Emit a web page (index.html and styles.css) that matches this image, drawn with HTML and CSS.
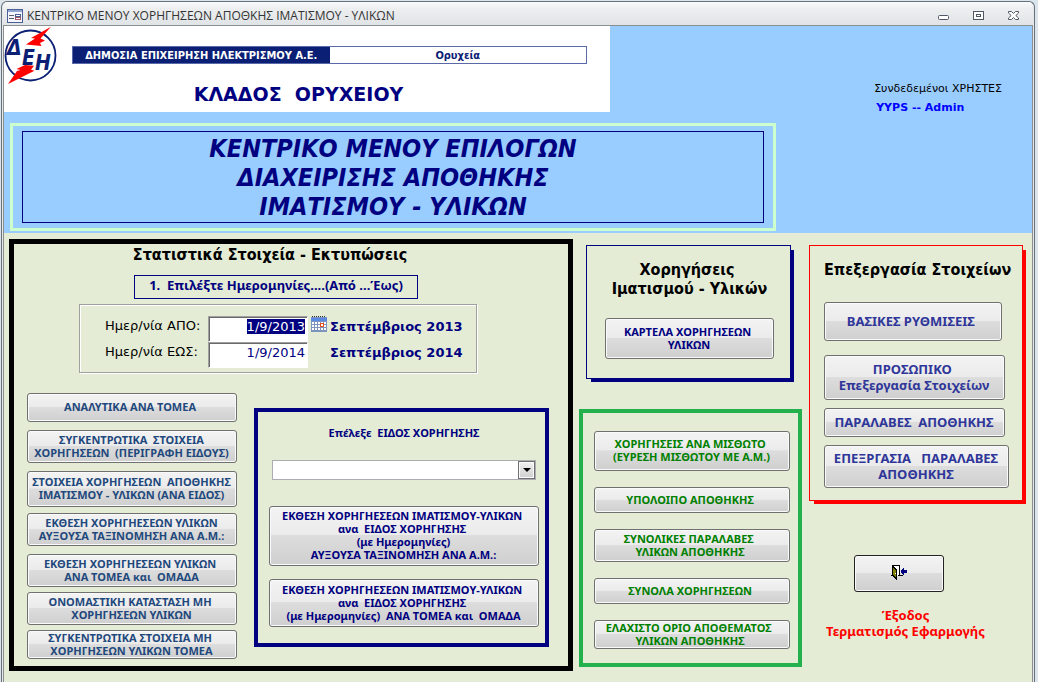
FILE: index.html
```html
<!DOCTYPE html>
<html lang="el">
<head>
<meta charset="utf-8">
<title>ΚΕΝΤΡΙΚΟ ΜΕΝΟΥ ΧΟΡΗΓΗΣΕΩΝ ΑΠΟΘΚΗΣ ΙΜΑΤΙΣΜΟΥ - ΥΛΙΚΩΝ</title>
<link rel="stylesheet" href="styles.css">
</head>
<body>
<div class="window">
  <div class="titlebar">
    <svg class="form-icon" width="16" height="14" viewBox="0 0 16 14" aria-hidden="true">
      <rect x=".5" y=".5" width="15" height="13" fill="#f4f6fc" stroke="#4a5f94"/>
      <rect x="1" y="1" width="14" height="2" fill="#8ea4d2"/>
      <path d="M2 6.500h5M2 9.500h5" stroke="#5b5f6b"/>
      <rect x="8.500" y="5.500" width="5" height="2" fill="#fff" stroke="#4a5f94"/>
      <rect x="8.500" y="8.500" width="5" height="2" fill="#fff" stroke="#a55a6a"/>
    </svg>
    <span class="titlebar-text">ΚΕΝΤΡΙΚΟ ΜΕΝΟΥ ΧΟΡΗΓΗΣΕΩΝ ΑΠΟΘΚΗΣ ΙΜΑΤΙΣΜΟΥ - ΥΛΙΚΩΝ</span>
    <div class="window-controls">
      <button type="button" aria-label="Ελαχιστοποίηση"><svg width="12" height="10" viewBox="0 0 12 10"><rect x=".5" y="4.500" width="10" height="4" rx="1" fill="#fff" stroke="#505868"/></svg></button>
      <button type="button" aria-label="Επαναφορά"><svg width="12" height="10" viewBox="0 0 12 10"><rect x=".5" y=".5" width="10" height="8" fill="#fff" stroke="#505868"/><rect x="3.500" y="3.500" width="4" height="2" fill="#fff" stroke="#505868"/></svg></button>
      <button type="button" aria-label="Κλείσιμο"><svg width="12" height="10" viewBox="0 0 12 10"><path d="M.5.5h3l2 2 2-2h3v1.500L7.800 4.500l2.700 2.500v1.500h-3l-2-2-2 2h-3V7l2.700-2.500L.5 2z" fill="#fff" stroke="#505868"/></svg></button>
    </div>
  </div>

  <div class="client">
    <header class="header">
      <div class="header-top">
        <div class="brand">
          <svg class="logo" width="56" height="60" viewBox="0 0 56 60" role="img" aria-label="ΔΕΗ">
            <circle cx="26.500" cy="29.500" r="25" fill="#fff" stroke="#0b2074" stroke-width="1.800"/>
            <path d="M47 .8L27 12l4 .5-9 6 15.500 1.500L36 17l5-2.500-4.500-2z" fill="#f00"/>
            <path d="M4 58l9-13 3.500-1-4-1 8.500-4 9 .8-3 4 3.500 1z" fill="#f00"/>
            <g class="logo-letters">
              <text x="3" y="29">Δ</text>
              <text x="18" y="39">Ε</text>
              <text x="31" y="44">Η</text>
            </g>
          </svg>
          <div class="brand-body">
            <div class="banner">
              <span class="banner-company">ΔΗΜΟΣΙΑ ΕΠΙΧΕΙΡΗΣΗ ΗΛΕΚΤΡΙΣΜΟΥ Α.Ε.</span>
              <span class="banner-unit">Ορυχεία</span>
            </div>
            <div class="branch">ΚΛΑΔΟΣ&nbsp; ΟΡΥΧΕΙΟΥ</div>
          </div>
        </div>
        <div class="users">
          <div class="users-label">Συνδεδεμένοι ΧΡΗΣΤΕΣ</div>
          <div class="users-name">YYPS -- Admin</div>
        </div>
      </div>
      <div class="headline">
        <h1>ΚΕΝΤΡΙΚΟ ΜΕΝΟΥ ΕΠΙΛΟΓΩΝ<br>ΔΙΑΧΕΙΡΙΣΗΣ ΑΠΟΘΗΚΗΣ<br>ΙΜΑΤΙΣΜΟΥ - ΥΛΙΚΩΝ</h1>
      </div>
    </header>

    <main class="main">
      <section class="stats">
        <h2>Στατιστικά Στοιχεία - Εκτυπώσεις</h2>
        <div class="step">1.&nbsp; Επιλέξτε Ημερομηνίες....(Από ...Έως)</div>
        <div class="dates">
          <label for="from">Ημερ/νία ΑΠΟ:</label>
          <input id="from" type="text" value="1/9/2013">
          <svg class="calendar" width="16" height="16" viewBox="0 0 16 16" aria-hidden="true">
            <rect x="0" y="1" width="16" height="15" fill="#7c93bd"/>
            <rect x="0" y="2" width="16" height="3" fill="#5b8be0"/>
            <path d="M1 .5h14" stroke="#333" stroke-dasharray="1 1"/>
            <path d="M1 6h2v2H1zM4 6h2v2H4zM7 6h2v2H7zM10 6h2v2h-2zM13 6h2v2h-2zM1 9h2v2H1zM4 9h2v2H4zM7 9h2v2H7zM13 9h2v2h-2zM1 12h2v2H1zM4 12h2v2H4zM7 12h2v2H7zM10 12h2v2h-2zM13 12h2v2h-2z" fill="#fff"/>
            <rect x="9.500" y="7.500" width="3" height="3" fill="#fff" stroke="#e8501c"/>
          </svg>
          <span class="month">Σεπτέμβριος 2013</span>
          <label for="to">Ημερ/νία ΕΩΣ:</label>
          <input id="to" type="text" value="1/9/2014">
          <span></span>
          <span class="month">Σεπτέμβριος 2014</span>
        </div>
        <div class="stats-body">
          <div class="reports">
            <div class="stack stack-loose">
              <button class="btn h-29" type="button">ΑΝΑΛΥΤΙΚΑ ΑΝΑ ΤΟΜΕΑ&nbsp;</button>
              <button class="btn h-33" type="button">ΣΥΓΚΕΝΤΡΩΤΙΚΑ&nbsp; ΣΤΟΙΧΕΙΑ<br>ΧΟΡΗΓΗΣΕΩΝ&nbsp; (ΠΕΡΙΓΡΑΦΗ ΕΙΔΟΥΣ)</button>
              <button class="btn h-36" type="button">ΣΤΟΙΧΕΙΑ ΧΟΡΗΓΗΣΕΩΝ&nbsp; ΑΠΟΘΗΚΗΣ<br>ΙΜΑΤΙΣΜΟΥ - ΥΛΙΚΩΝ (ΑΝΑ ΕΙΔΟΣ)</button>
            </div>
            <div class="stack stack-loose">
              <button class="btn h-33" type="button">ΕΚΘΕΣΗ ΧΟΡΗΓΗΕΣΕΩΝ ΥΛΙΚΩΝ<br>ΑΥΞΟΥΣΑ ΤΑΞΙΝΟΜΗΣΗ ΑΝΑ Α.Μ.:</button>
              <div class="stack stack-tight">
                <button class="btn h-33" type="button">ΕΚΘΕΣΗ ΧΟΡΗΓΗΕΣΕΩΝ ΥΛΙΚΩΝ&nbsp;<br>ΑΝΑ ΤΟΜΕΑ και&nbsp; ΟΜΑΔΑ</button>
                <button class="btn h-33" type="button">ΟΝΟΜΑΣΤΙΚΗ ΚΑΤΑΣΤΑΣΗ ΜΗ&nbsp;<br>ΧΟΡΗΓΗΣΕΩΝ ΥΛΙΚΩΝ</button>
                <button class="btn h-29" type="button">ΣΥΓΚΕΝΤΡΩΤΙΚΑ ΣΤΟΙΧΕΙΑ ΜΗ&nbsp;<br>ΧΟΡΗΓΗΣΕΩΝ ΥΛΙΚΩΝ ΤΟΜΕΑ</button>
              </div>
            </div>
          </div>
          <div class="kind">
            <label for="kind">Επέλεξε&nbsp; ΕΙΔΟΣ ΧΟΡΗΓΗΣΗΣ</label>
            <div class="combo">
              <select id="kind"><option></option></select>
              <span class="combo-arrow"></span>
            </div>
            <button class="btn navy h-60" type="button">ΕΚΘΕΣΗ ΧΟΡΗΓΗΕΣΕΩΝ ΙΜΑΤΙΣΜΟΥ-ΥΛΙΚΩΝ&nbsp;<br>ανα&nbsp; ΕΙΔΟΣ ΧΟΡΗΓΗΣΗΣ&nbsp;<br>(με Ημερομηνίες)<br>ΑΥΞΟΥΣΑ ΤΑΞΙΝΟΜΗΣΗ ΑΝΑ Α.Μ.:</button>
            <button class="btn navy h-48" type="button">ΕΚΘΕΣΗ ΧΟΡΗΓΗΕΣΕΩΝ ΙΜΑΤΙΣΜΟΥ-ΥΛΙΚΩΝ&nbsp;<br>ανα&nbsp; ΕΙΔΟΣ ΧΟΡΗΓΗΣΗΣ&nbsp;<br>(με Ημερομηνίες)&nbsp; ΑΝΑ ΤΟΜΕΑ και&nbsp; ΟΜΑΔΑ</button>
          </div>
        </div>
      </section>

      <div class="column-middle">
        <section class="card card-blue">
          <h2>Χορηγήσεις&nbsp;<br>Ιματισμού - Υλικών</h2>
          <button class="btn navy h-41" type="button">ΚΑΡΤΕΛΑ ΧΟΡΗΓΗΣΕΩΝ&nbsp;<br>ΥΛΙΚΩΝ</button>
        </section>
        <section class="totals">
          <button class="btn green h-40" type="button">ΧΟΡΗΓΗΣΕΙΣ ΑΝΑ ΜΙΣΘΩΤΟ&nbsp;<br>(ΕΥΡΕΣΗ ΜΙΣΘΩΤΟΥ ΜΕ Α.Μ.)</button>
          <button class="btn green h-26" type="button">ΥΠΟΛΟΙΠΟ ΑΠΟΘΗΚΗΣ&nbsp;</button>
          <button class="btn green h-33" type="button">ΣΥΝΟΛΙΚΕΣ ΠΑΡΑΛΑΒΕΣ&nbsp;&nbsp;<br>ΥΛΙΚΩΝ ΑΠΟΘΗΚΗΣ&nbsp;</button>
          <button class="btn green h-26" type="button">ΣΥΝΟΛΑ ΧΟΡΗΓΗΣΕΩΝ&nbsp;</button>
          <button class="btn green h-29" type="button">ΕΛΑΧΙΣΤΟ ΟΡΙΟ ΑΠΟΘΕΜΑΤΟΣ&nbsp;&nbsp;<br>ΥΛΙΚΩΝ ΑΠΟΘΗΚΗΣ&nbsp;</button>
        </section>
      </div>

      <div class="column-right">
        <section class="card card-red">
          <h2>Επεξεργασία Στοιχείων</h2>
          <button class="btn large h-39 w-178" type="button">ΒΑΣΙΚΕΣ ΡΥΘΜΙΣΕΙΣ&nbsp;</button>
          <div class="stack stack-loose edit-group">
            <button class="btn large h-45 w-181" type="button">ΠΡΟΣΩΠΙΚΟ&nbsp;<br>Επεξεργασία Στοιχείων</button>
            <button class="btn large h-29 w-181" type="button">ΠΑΡΑΛΑΒΕΣ&nbsp; ΑΠΟΘΗΚΗΣ</button>
            <button class="btn large h-43 w-185" type="button">ΕΠΕΞΡΓΑΣΙΑ&nbsp;&nbsp; ΠΑΡΑΛΑΒΕΣ<br>ΑΠΟΘΗΚΗΣ</button>
          </div>
        </section>
        <div class="exit">
          <button class="btn exit-btn" type="button" aria-label="Έξοδος">
            <svg width="16" height="16" viewBox="0 0 16 16" shape-rendering="crispEdges" aria-hidden="true">
              <path d="M1 1h8v10H1z" fill="#fff"/>
              <path d="M1 .5h8M0 10.500h2M8.500 1v10M7 10.500h5M1.500 1v10" stroke="#000" fill="none"/>
              <path d="M1 1h1l4 4v10H5l-4-4z" fill="#000"/>
              <path d="M2 3l3 3v7l-3-3z" fill="#808000"/>
              <path d="M4 8h1v1H4z" fill="#fff"/>
              <path d="M10 5h1V4h1V3h1v2h3v3h-3v2h-1V9h-1V8h-1z" fill="#000080"/>
            </svg>
          </button>
          <p>Έξοδος<br>Τερματισμός Εφαρμογής</p>
        </div>
      </div>
    </main>
  </div>
</div>
<script src="main.js"></script>
</body>
</html>
```

FILE: main.js
```js
const from = document.getElementById("from");
from.focus();
from.select();
```

FILE: styles.css
```css
* {
  box-sizing: border-box;
}

body {
  margin: 0;
  background: #dde5ec;
  font-family: "Noto Sans", "DejaVu Sans", sans-serif;
  color: #000;
}

h1, h2, p {
  margin: 0;
}

/* Window frame */

.window {
  display: flex;
  flex-direction: column;
  min-height: calc(100vh - 1px);
  margin: 1px 3px 0 1px;
  padding: 0 1px;
  border: 1px solid #66717a;
  border-bottom: 0;
  border-radius: 6px 6px 0 0;
  background: #e6e8ea;
}

.titlebar {
  display: flex;
  align-items: center;
  gap: 4px;
  height: 23px;
  padding: 5px 13px 1px 4px;
  border-radius: 5px 5px 0 0;
  background: linear-gradient(#fafbfb, #eceef0 30%, #e1e4e6);
}

.titlebar-text {
  flex: 1;
  font: 12px/16px "Open Sans", "Noto Sans", sans-serif;
  color: #333;
}

.window-controls {
  display: flex;
  gap: 23px;
}

.window-controls button {
  display: flex;
  padding: 0;
  border: 0;
  background: none;
}

.client {
  flex: 1;
  border: 1px solid #8a9090;
  border-bottom: 0;
  background: #e4ecd5;
}

/* Header */

.header {
  padding-bottom: 2px;
  background: #99ccff;
}

.header-top {
  display: flex;
  justify-content: space-between;
  height: 86px;
}

.brand {
  display: flex;
  flex: 0 1 606px;
  padding-right: 23px;
  background: #fff;
}

.logo {
  flex: none;
}

.logo-letters {
  font: italic bold 21px "DejaVu Sans Condensed", "DejaVu Sans", sans-serif;
  fill: #0b2074;
}

.brand-body {
  flex: 1;
  padding: 20px 0 0 12px;
}

.banner {
  display: flex;
  height: 18px;
  border: 1px solid #5a6aa8;
  font: bold 11px/18px "DejaVu Sans Condensed", "DejaVu Sans", sans-serif;
  text-align: center;
}

.banner-company {
  flex: 1;
  background: #0b2074;
  color: #fff;
}

.banner-unit {
  flex: 1;
  color: #0b2074;
}

.branch {
  padding: 18px 62px 0 0;
  font: bold 19px/24px "DejaVu Sans", sans-serif;
  color: #000080;
  text-align: center;
}

.users {
  padding: 55px 30px 0 0;
  font: 11px/16px "DejaVu Sans", sans-serif;
}

.users-name {
  padding: 3px 0 0 2px;
  font-weight: bold;
  color: #0000ff;
}

.headline {
  max-width: 766px;
  margin: 11px 6px 0;
  padding: 5px 9px;
  border: 3px solid #ccffcc;
}

.headline h1 {
  padding: 2px 0 1px;
  border: 1px solid #000080;
  font: italic bold 25px/29px "DejaVu Sans Condensed", "DejaVu Sans", sans-serif;
  color: #000080;
  text-align: center;
}

/* Main grid */

.main {
  display: grid;
  grid-template-columns: minmax(0, 564fr) minmax(0, 223fr) minmax(0, 218fr);
  gap: 6px;
  align-items: start;
  padding: 6px 6px 11px 5px;
}

h2 {
  font: bold 16px/19px "DejaVu Sans Condensed", "DejaVu Sans", sans-serif;
  text-align: center;
}

.btn {
  display: block;
  width: 100%;
  padding: 0 1px 2px 0;
  border: 1px solid #707070;
  border-radius: 3px;
  box-shadow: inset 0 0 0 1px #fafafa;
  background: linear-gradient(#f3f3f3, #ebebeb 48%, #dddddd 49%, #cfcfcf);
  font: bold 11px/13px "Noto Sans", sans-serif;
  color: #1f497d;
  white-space: nowrap;
}

.navy { color: #000080; }
.green { color: #008000; }

.large {
  font-size: 13px;
  line-height: 16px;
  color: #2f3699;
}

.h-26 { height: 26px; }
.h-29 { height: 29px; }
.h-33 { height: 33px; }
.h-36 { height: 36px; }
.h-39 { height: 39px; }
.h-40 { height: 40px; }
.h-41 { height: 41px; }
.h-43 { height: 43px; }
.h-45 { height: 45px; }
.h-48 { height: 48px; }
.h-60 { height: 60px; }
.w-178 { width: 178px; }
.w-181 { width: 181px; }
.w-185 { width: 185px; }

.stack {
  display: flex;
  flex-direction: column;
}

.stack-loose { gap: 8px; }
.stack-tight { gap: 5px; }

/* Statistics */

.stats {
  padding: 1px 19px 7px 13px;
  border: 5px solid #000;
}

.stats h2 {
  padding-right: 36px;
}

.step {
  width: 284px;
  height: 24px;
  margin: 11px 0 0 107px;
  border: 1px solid #000080;
  font-size: 13px;
  font-weight: bold;
  line-height: 19px;
  color: #000080;
  text-align: center;
}

.dates {
  display: grid;
  grid-template-columns: 100px 100px 16px 1fr;
  column-gap: 3px;
  align-items: start;
  width: 398px;
  margin: 5px 0 0 52px;
  padding: 11px 0 4px 25px;
  border: 1px solid #a0a0a0;
  box-shadow: 1px 1px 0 #fff, inset 1px 1px 0 #fff;
}

.dates label {
  font: 13px/20px "DejaVu Sans", sans-serif;
}

.dates input {
  width: 100%;
  height: 26px;
  padding: 0 2px 5px;
  border: 1px solid;
  border-color: #a0a0a0 #fff #fff #a0a0a0;
  box-shadow: inset 1px 1px 0 #696969;
  background: #fff;
  font: 13px/18px "DejaVu Sans", sans-serif;
  color: #000080;
  text-align: right;
  outline: 0;
}

.dates input::selection {
  background: #000080;
  color: #fff;
}

.month {
  font: bold 13px/22px "DejaVu Sans", sans-serif;
  color: #000080;
}

.stats-body {
  display: grid;
  grid-template-columns: 210fr 295fr;
  gap: 17px;
  align-items: start;
  margin-top: 20px;
}

.reports {
  display: flex;
  flex-direction: column;
  gap: 6px;
}

.kind {
  display: flex;
  flex-direction: column;
  margin-top: 15px;
  padding: 14px 6px 16px 11px;
  border: 4px solid #000080;
}

.kind label {
  font-size: 11px;
  font-weight: bold;
  line-height: 13px;
  color: #000080;
  text-align: center;
}

.combo {
  position: relative;
  margin: 21px 3px 26px;
}

.combo select {
  display: block;
  width: 100%;
  height: 20px;
  border: 1px solid #abadb3;
  border-radius: 0;
  appearance: none;
  background: #fff;
}

.combo-arrow {
  position: absolute;
  top: 1px;
  right: 1px;
  display: grid;
  place-items: center;
  width: 17px;
  height: 18px;
  border: 1px solid #707070;
  background: linear-gradient(#f2f2f2, #cfcfcf);
  box-shadow: inset 0 0 0 1px #fafafa;
  pointer-events: none;
}

.combo-arrow::after {
  content: "";
  border: 4px solid transparent;
  border-top-color: #000;
  border-bottom: 0;
}

.kind .btn + .btn {
  margin-top: 13px;
}

/* Middle column */

.card {
  border: 1px solid currentColor;
  box-shadow: 4px 4px 0 -1px currentColor;
}

.card h2 {
  color: #000;
}

.card-blue {
  margin: 6px 11px 0 7px;
  padding: 14px 16px 19px 18px;
  color: #000080;
}

.card-blue .btn {
  margin-top: 20px;
}

.totals {
  display: flex;
  flex-direction: column;
  gap: 16px;
  margin-top: 30px;
  padding: 18px 8px 14px 11px;
  border: 4px solid #22b14c;
}

/* Right column */

.column-right {
  padding-left: 1px;
}

.card-red {
  margin: 6px 3px 0 0;
  padding: 14px 12px 12px 14px;
  color: #ff0000;
}

.card-red h2 {
  white-space: nowrap;
}

.card-red h2 + .btn {
  margin-top: 23px;
}

.edit-group {
  margin-top: 14px;
}

.exit {
  padding: 54px 24px 0 0;
  color: #ff0000;
  font-size: 13px;
  font-weight: bold;
  line-height: 16px;
  text-align: center;
}

.exit-btn {
  display: grid;
  place-items: center;
  width: 90px;
  height: 37px;
  margin: 0 auto 15px 45px;
  border-color: #222;
}
```
